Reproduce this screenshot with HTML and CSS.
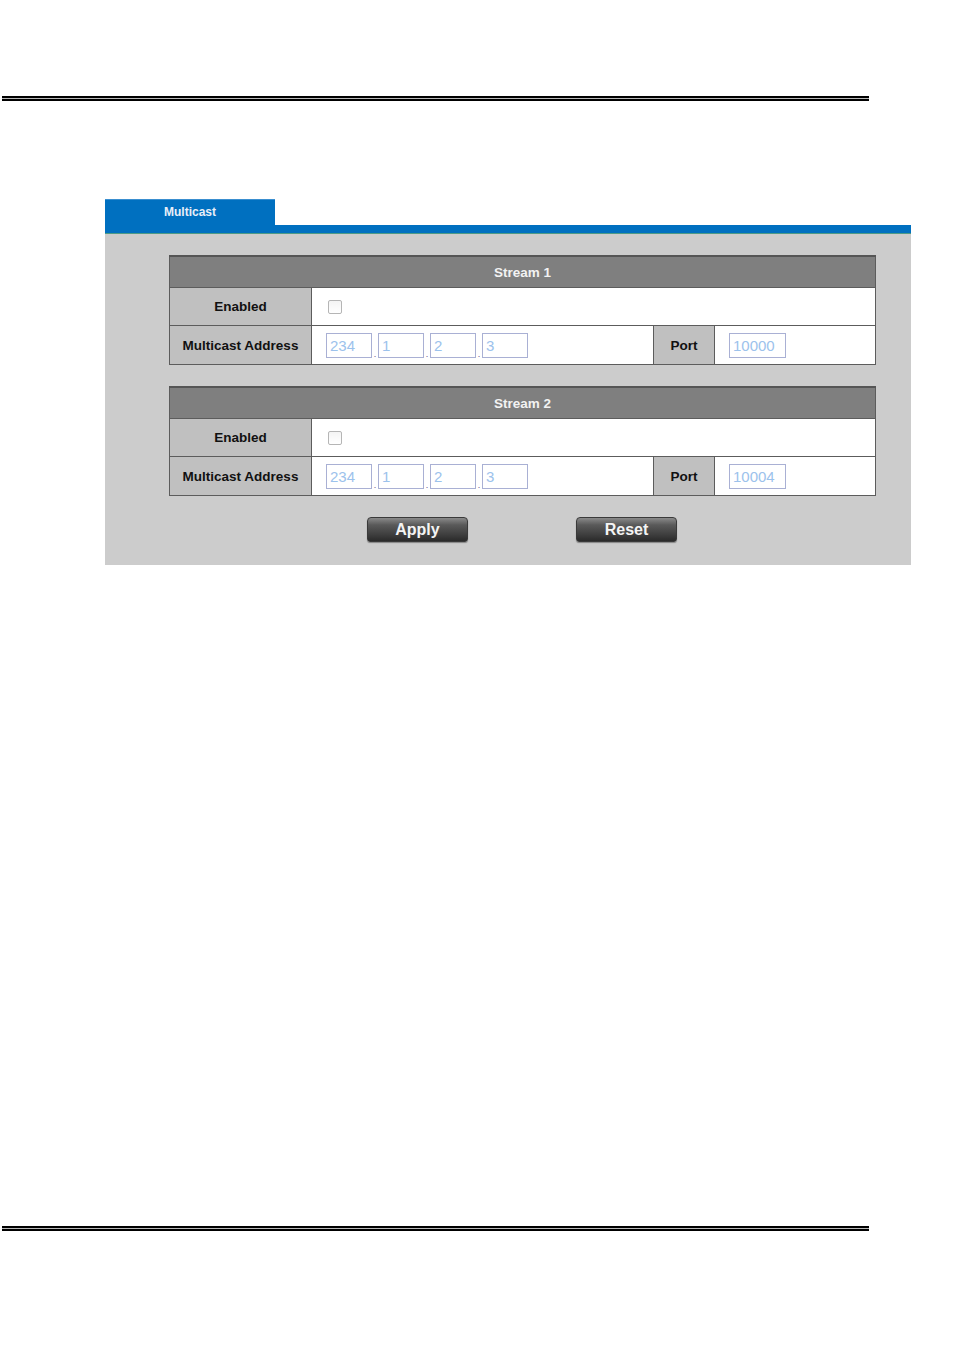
FILE: index.html
```html
<!DOCTYPE html>
<html>
<head>
<meta charset="utf-8">
<link rel="stylesheet" href="styles.css">
</head>
<body>
<div class="rule rule-top"></div>
<div class="page">
  <div class="tab">Multicast</div>
  <div class="bar"></div>
  <div class="panel">
    <table class="stream">
      <colgroup><col class="c1"><col class="c2"><col class="c3"><col class="c4"></colgroup>
      <tr><th colspan="4" class="head">Stream 1</th></tr>
      <tr class="row">
        <td class="label">Enabled</td>
        <td colspan="3" class="val"><span class="check"></span></td>
      </tr>
      <tr class="row row-addr">
        <td class="label">Multicast Address</td>
        <td class="val"><div class="ip"><span class="box">234</span><span class="dot">.</span><span class="box">1</span><span class="dot">.</span><span class="box">2</span><span class="dot">.</span><span class="box">3</span></div></td>
        <td class="label">Port</td>
        <td class="val"><span class="box port">10000</span></td>
      </tr>
    </table>
    <table class="stream">
      <colgroup><col class="c1"><col class="c2"><col class="c3"><col class="c4"></colgroup>
      <tr><th colspan="4" class="head">Stream 2</th></tr>
      <tr class="row">
        <td class="label">Enabled</td>
        <td colspan="3" class="val"><span class="check"></span></td>
      </tr>
      <tr class="row row-addr">
        <td class="label">Multicast Address</td>
        <td class="val"><div class="ip"><span class="box">234</span><span class="dot">.</span><span class="box">1</span><span class="dot">.</span><span class="box">2</span><span class="dot">.</span><span class="box">3</span></div></td>
        <td class="label">Port</td>
        <td class="val"><span class="box port">10004</span></td>
      </tr>
    </table>
    <div class="buttons">
      <span class="btn">Apply</span>
      <span class="btn">Reset</span>
    </div>
  </div>
</div>
<div class="rule rule-bottom"></div>
</body>
</html>
```
FILE: styles.css
```css
html, body {
  margin: 0;
  padding: 0;
  background: #ffffff;
  font-family: "Liberation Sans", Arial, sans-serif;
}

.rule {
  width: 867px;
  margin-left: 2px;
  height: 5px;
  box-sizing: border-box;
  border-top: 2px solid #000;
  border-bottom: 2px solid #000;
  background: #b8b8b8;
}
.rule-top { margin-top: 96px; }
.rule-bottom { margin-top: 661px; }

.page {
  margin-left: 105px;
  width: 806px;
  margin-top: 98px;
}

.tab {
  width: 170px;
  height: 26px;
  box-sizing: border-box;
  background: #0070c0;
  border-top: 1px solid #3a8fd0;
  color: #e8eef8;
  font-weight: bold;
  font-size: 12px;
  line-height: 25px;
  text-align: center;
}

.bar {
  height: 9px;
  box-sizing: border-box;
  background: #0070c0;
  border-bottom: 1px solid #4d9a86;
}

.panel {
  background: #cccccc;
  padding: 21px 36px 23px 64px;
}

.stream {
  width: 706px;
  border-collapse: collapse;
  table-layout: fixed;
  margin-bottom: 21px;
  font-size: 13.5px;
}
.c1 { width: 142px; }
.c2 { width: 342px; }
.c3 { width: 61px; }
.c4 { width: 161px; }

.stream th, .stream td {
  border: 1px solid #5c5c5c;
  padding: 0;
}

.head {
  height: 30px;
  background: #7f7f7f;
  color: #f2f2f2;
  font-weight: bold;
  text-align: center;
  border-top: 2px solid #555 !important;
}

.row td { height: 37px; }
.row-addr td { height: 38px; }

.label {
  background: #c0c0c0;
  color: #111;
  font-weight: bold;
  text-align: center;
}

.val {
  background: #ffffff;
  padding-left: 14px !important;
}

.check {
  display: block;
  width: 12px;
  height: 12px;
  margin-left: 2px;
  border: 1px solid #b5b5b5;
  border-radius: 2px;
  background: linear-gradient(#f4f4f4, #ffffff);
}

.ip {
  display: flex;
  align-items: flex-end;
}

.box {
  display: inline-block;
  box-sizing: border-box;
  width: 46px;
  height: 25px;
  border: 1px solid #a9b0d4;
  color: #9cc2ec;
  font-size: 15px;
  line-height: 23px;
  padding-left: 3px;
  background: #fff;
  vertical-align: middle;
}
.box.port { width: 57px; }

.dot {
  width: 6px;
  color: #6a4a8a;
  font-size: 9px;
  line-height: 8px;
  text-align: center;
}

.buttons {
  display: flex;
  justify-content: center;
  gap: 108px;
  margin-top: 1px;
}

.btn {
  width: 101px;
  height: 25px;
  box-sizing: border-box;
  border-radius: 4px 4px 3px 3px;
  background: linear-gradient(#8a8a8a 0%, #5a5a5a 30%, #3c3c3c 75%, #2a2a2a 100%);
  border: 1px solid #3a3a3a;
  box-shadow: 0 1px 1px rgba(0,0,0,0.35);
  color: #f4f4f4;
  font-weight: bold;
  font-size: 16px;
  line-height: 24px;
  text-align: center;
}
```
